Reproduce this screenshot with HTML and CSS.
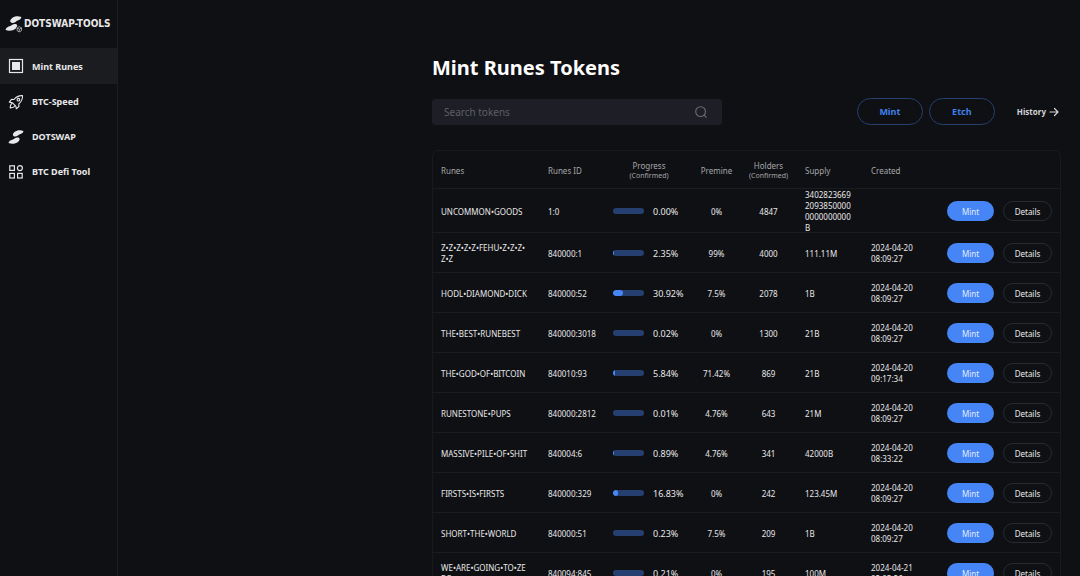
FILE: index.html
```html
<!DOCTYPE html>
<html lang="en">
<head>
<meta charset="utf-8">
<meta name="viewport" content="width=device-width, initial-scale=1">
<title>Mint Runes Tokens</title>
<link rel="stylesheet" href="styles.css">
</head>
<body>
<svg class="defs" aria-hidden="true">
  <symbol id="swap" viewBox="0 0 16 16">
    <path fill="currentColor" d="M15.400 1.900C12.500 .8 9 1 6.500 3C4.800 4.400 4.300 6.300 5.700 7.200C7 8 8.600 7.500 9.900 6.500C11.600 5.200 12.200 5.300 13.600 4.500C14.800 3.800 15.400 2.900 15.400 1.900Z"/>
    <path fill="currentColor" d="M.6 14.100C3.500 15.200 7.500 15 10 13C11.700 11.600 12.200 9.700 10.800 8.800C9.500 8 7.900 8.500 6.600 9.500C4.900 10.800 3.800 10.700 2.400 11.500C1.200 12.200 .6 13.100 .6 14.100Z"/>
  </symbol>
</svg>
<div class="app">
  <aside class="sidebar">
    <a class="brand" href="#">
      <svg class="brand-mark" viewBox="0 0 17 17" aria-hidden="true">
        <use href="#swap" width="16" height="16"/>
        <circle cx="13.500" cy="13.500" r="3.200" fill="#101115"/>
        <path d="M13.500 11L15.600 12.200V14.800L13.500 16L11.400 14.800V12.200ZM11.400 12.200L13.500 13.500L15.600 12.200M13.500 13.500V16" fill="none" stroke="#c8c9cc" stroke-width=".7"/>
      </svg>
      <span>DOTSWAP-TOOLS</span>
    </a>
    <nav class="menu">
      <a class="menu-item active" href="#">
        <svg viewBox="0 0 16 16" aria-hidden="true"><rect x="1.500" y="1.500" width="13" height="13" fill="none" stroke="currentColor" stroke-width="1.200"/><rect x="4" y="4" width="8" height="8" fill="currentColor"/></svg>
        Mint Runes
      </a>
      <a class="menu-item" href="#">
        <svg viewBox="0 0 16 16" fill="none" stroke="currentColor" stroke-width="1.100" stroke-linejoin="round" stroke-linecap="round" aria-hidden="true"><path d="M14.500 1.600C10.800 1.400 8.200 2.700 6 5.500L3.500 5.400L1.300 8.100L4.200 8.700L7.800 12.200L8.300 14.800L10.900 12.500L10.800 10C13.400 7.700 14.700 5.200 14.500 1.600Z"/><circle cx="10.400" cy="5.700" r="1.300"/><path d="M4.200 9.300C2.500 10 2.300 12 2.200 13.900C4.200 13.800 5.900 13.500 6.800 12"/></svg>
        BTC-Speed
      </a>
      <a class="menu-item" href="#">
        <svg viewBox="0 0 16 16" aria-hidden="true"><use href="#swap" width="16" height="16"/></svg>
        DOTSWAP
      </a>
      <a class="menu-item" href="#">
        <svg viewBox="0 0 16 16" fill="none" stroke="currentColor" stroke-width="1.200" aria-hidden="true"><rect x="1.800" y="1.800" width="4.600" height="4.600"/><circle cx="11.900" cy="4.100" r="2.500"/><rect x="1.800" y="9.400" width="4.600" height="4.600"/><rect x="9.600" y="9.400" width="4.600" height="4.600"/></svg>
        BTC Defi Tool
      </a>
    </nav>
  </aside>
  <main class="content">
    <h1>Mint Runes Tokens</h1>
    <div class="toolbar">
      <form class="search">
        <input type="search" placeholder="Search tokens" aria-label="Search tokens">
        <button type="submit" aria-label="Search">
          <svg viewBox="0 0 14 14" fill="none" stroke="currentColor" stroke-width="1.100" stroke-linecap="round" aria-hidden="true"><circle cx="6.600" cy="6.600" r="4.900"/><path d="M10.200 10.200L12.300 12.300"/></svg>
        </button>
      </form>
      <div class="actions">
        <button class="outline" type="button">Mint</button>
        <button class="outline" type="button">Etch</button>
      </div>
      <a class="history" href="#">History
        <svg viewBox="0 0 10 10" fill="none" stroke="currentColor" stroke-width="1.200" stroke-linecap="round" stroke-linejoin="round" aria-hidden="true"><path d="M1 5H9M5.500 1.500L9 5L5.500 8.500"/></svg>
      </a>
    </div>
    <table class="tokens">
      <colgroup>
        <col class="c-name"><col class="c-id"><col class="c-progress"><col class="c-premine"><col class="c-holders"><col class="c-supply"><col class="c-created"><col class="c-actions">
      </colgroup>
      <thead>
        <tr><th>Runes</th><th>Runes ID</th><th class="center">Progress<small>(Confirmed)</small></th><th class="center">Premine</th><th class="center">Holders<small>(Confirmed)</small></th><th>Supply</th><th>Created</th><th></th></tr>
      </thead>
      <tbody>
        <tr><td>UNCOMMON•GOODS</td><td>1:0</td><td><div class="progress"><span class="bar"><span style="width:0%"></span></span>0.00%</div></td><td class="center">0%</td><td class="center">4847</td><td>340282366920938500000000000000B</td><td></td><td><div class="row-actions"><button class="mint" type="button">Mint</button><button class="details" type="button">Details</button></div></td></tr>
        <tr><td>Z•Z•Z•Z•Z•FEHU•Z•Z•Z•<wbr>Z•Z</td><td>840000:1</td><td><div class="progress"><span class="bar"><span style="width:2.35%"></span></span>2.35%</div></td><td class="center">99%</td><td class="center">4000</td><td>111.11M</td><td>2024-04-20 08:09:27</td><td><div class="row-actions"><button class="mint" type="button">Mint</button><button class="details" type="button">Details</button></div></td></tr>
        <tr><td>HODL•DIAMOND•DICK</td><td>840000:52</td><td><div class="progress"><span class="bar"><span style="width:30.92%"></span></span>30.92%</div></td><td class="center">7.5%</td><td class="center">2078</td><td>1B</td><td>2024-04-20 08:09:27</td><td><div class="row-actions"><button class="mint" type="button">Mint</button><button class="details" type="button">Details</button></div></td></tr>
        <tr><td>THE•BEST•RUNEBEST</td><td>840000:3018</td><td><div class="progress"><span class="bar"><span style="width:0.02%"></span></span>0.02%</div></td><td class="center">0%</td><td class="center">1300</td><td>21B</td><td>2024-04-20 08:09:27</td><td><div class="row-actions"><button class="mint" type="button">Mint</button><button class="details" type="button">Details</button></div></td></tr>
        <tr><td>THE•GOD•OF•BITCOIN</td><td>840010:93</td><td><div class="progress"><span class="bar"><span style="width:5.84%"></span></span>5.84%</div></td><td class="center">71.42%</td><td class="center">869</td><td>21B</td><td>2024-04-20 09:17:34</td><td><div class="row-actions"><button class="mint" type="button">Mint</button><button class="details" type="button">Details</button></div></td></tr>
        <tr><td>RUNESTONE•PUPS</td><td>840000:2812</td><td><div class="progress"><span class="bar"><span style="width:0.01%"></span></span>0.01%</div></td><td class="center">4.76%</td><td class="center">643</td><td>21M</td><td>2024-04-20 08:09:27</td><td><div class="row-actions"><button class="mint" type="button">Mint</button><button class="details" type="button">Details</button></div></td></tr>
        <tr><td>MASSIVE•PILE•OF•SHIT</td><td>840004:6</td><td><div class="progress"><span class="bar"><span style="width:0.89%"></span></span>0.89%</div></td><td class="center">4.76%</td><td class="center">341</td><td>42000B</td><td>2024-04-20 08:33:22</td><td><div class="row-actions"><button class="mint" type="button">Mint</button><button class="details" type="button">Details</button></div></td></tr>
        <tr><td>FIRSTS•IS•FIRSTS</td><td>840000:329</td><td><div class="progress"><span class="bar"><span style="width:16.83%"></span></span>16.83%</div></td><td class="center">0%</td><td class="center">242</td><td>123.45M</td><td>2024-04-20 08:09:27</td><td><div class="row-actions"><button class="mint" type="button">Mint</button><button class="details" type="button">Details</button></div></td></tr>
        <tr><td>SHORT•THE•WORLD</td><td>840000:51</td><td><div class="progress"><span class="bar"><span style="width:0.23%"></span></span>0.23%</div></td><td class="center">7.5%</td><td class="center">209</td><td>1B</td><td>2024-04-20 08:09:27</td><td><div class="row-actions"><button class="mint" type="button">Mint</button><button class="details" type="button">Details</button></div></td></tr>
        <tr><td>WE•ARE•GOING•TO•ZE<wbr>RO</td><td>840094:845</td><td><div class="progress"><span class="bar"><span style="width:0.21%"></span></span>0.21%</div></td><td class="center">0%</td><td class="center">195</td><td>100M</td><td>2024-04-21 02:05:26</td><td><div class="row-actions"><button class="mint" type="button">Mint</button><button class="details" type="button">Details</button></div></td></tr>
      </tbody>
    </table>
  </main>
</div>
</body>
</html>
```
FILE: styles.css
```css
* { box-sizing: border-box; }

body {
  margin: 0;
  background: #0f1013;
  color: #e8e8ea;
  font: 8px/11px "Noto Sans", "Open Sans", sans-serif;
}

a { color: inherit; text-decoration: none; }
button, input { font: inherit; color: inherit; margin: 0; }
button { cursor: pointer; }
.defs { display: none; }

.app {
  display: flex;
  height: 100vh;
  overflow: hidden;
}

.sidebar {
  flex: 0 0 118px;
  min-width: 0;
  border-right: 1px solid #1d1e22;
}

.brand {
  display: flex;
  align-items: center;
  gap: 1px;
  height: 48px;
  padding-left: 5px;
  font: bold 10px/16px "DejaVu Sans Condensed", "DejaVu Sans", sans-serif;
  white-space: nowrap;
}

.brand-mark { width: 18px; height: 18px; flex: none; }

.menu-item {
  display: flex;
  align-items: center;
  gap: 8px;
  height: 35px;
  padding-left: 8px;
  font-size: 9px;
  font-weight: 700;
}

.menu-item svg { width: 16px; height: 16px; flex: none; }
.menu-item.active { background: #1a1c1f; height: 36px; }

.content {
  flex: 1;
  min-width: 0;
  padding: 54px 19px 0 314px;
}

h1 {
  margin: 0 0 16px;
  color: #fff;
  font-size: 20px;
  line-height: 28px;
  font-weight: 700;
}

.toolbar {
  display: flex;
  align-items: center;
  height: 27px;
  margin-bottom: 25px;
}

.search {
  display: flex;
  align-items: center;
  flex: 0 1 290px;
  height: 26px;
  padding: 0 14px 0 12px;
  border-radius: 4px;
  background: #1e1f26;
}

.search input {
  flex: 1;
  min-width: 0;
  padding: 0;
  border: 0;
  outline: 0;
  background: none;
  font-size: 10px;
  line-height: 16px;
}

.search input::placeholder { color: #5d5e66; opacity: 1; }

.search button {
  display: flex;
  padding: 0;
  border: 0;
  background: none;
  color: #6c6d75;
}

.search svg { width: 14px; height: 14px; }

.actions {
  display: flex;
  gap: 6px;
  margin-left: auto;
}

.outline {
  width: 66px;
  height: 27px;
  padding: 0;
  border: 1px solid #26406f;
  border-radius: 14px;
  background: none;
  color: #4080ea;
  font-size: 9px;
  font-weight: 700;
}

.history {
  display: flex;
  align-items: center;
  gap: 3px;
  margin: 0 2px 0 22px;
  color: #d4d5d8;
  font-weight: 700;
}

.history svg { width: 10px; height: 10px; }

.tokens {
  width: 100%;
  table-layout: fixed;
  border-collapse: separate;
  border-spacing: 0;
  border: 1px solid #191a1e;
  border-width: 1px 1px 0;
  border-radius: 6px;
}

.c-name { width: 107px; }
.c-id { width: 65px; }
.c-progress { width: 88px; }
.c-premine { width: 47px; }
.c-holders { width: 57px; }
.c-supply { width: 66px; }
.c-created { width: 76px; }
.c-actions { width: 121px; }

th, td {
  height: 40px;
  padding: 0 8px;
  box-shadow: inset 0 -1px #1b1c20;
  text-align: left;
  vertical-align: middle;
  overflow-wrap: anywhere;
}

th {
  height: 38px;
  padding: 0 4px 0 8px;
  color: #a5a6aa;
  font-weight: 400;
}

th small {
  display: block;
  font-size: 7px;
  line-height: 9px;
}

td.center, th.center { padding: 0; text-align: center; }
td:first-child { padding-right: 4px; }

.progress {
  display: flex;
  align-items: center;
  gap: 9px;
  font-size: 9px;
}

.bar {
  flex: 0 0 31px;
  height: 6px;
  border-radius: 3px;
  background: #253f70;
  overflow: hidden;
}

.bar span {
  display: block;
  height: 100%;
  border-radius: 3px;
  background: #4787f5;
}

.row-actions { display: flex; gap: 9px; }

.mint, .details {
  height: 20px;
  padding: 0;
  border-radius: 10px;
}

.mint {
  width: 47px;
  border: 0;
  background: #4585f6;
  color: #e4edff;
}

.details {
  width: 49px;
  border: 1px solid #292a2f;
  background: none;
}
```
